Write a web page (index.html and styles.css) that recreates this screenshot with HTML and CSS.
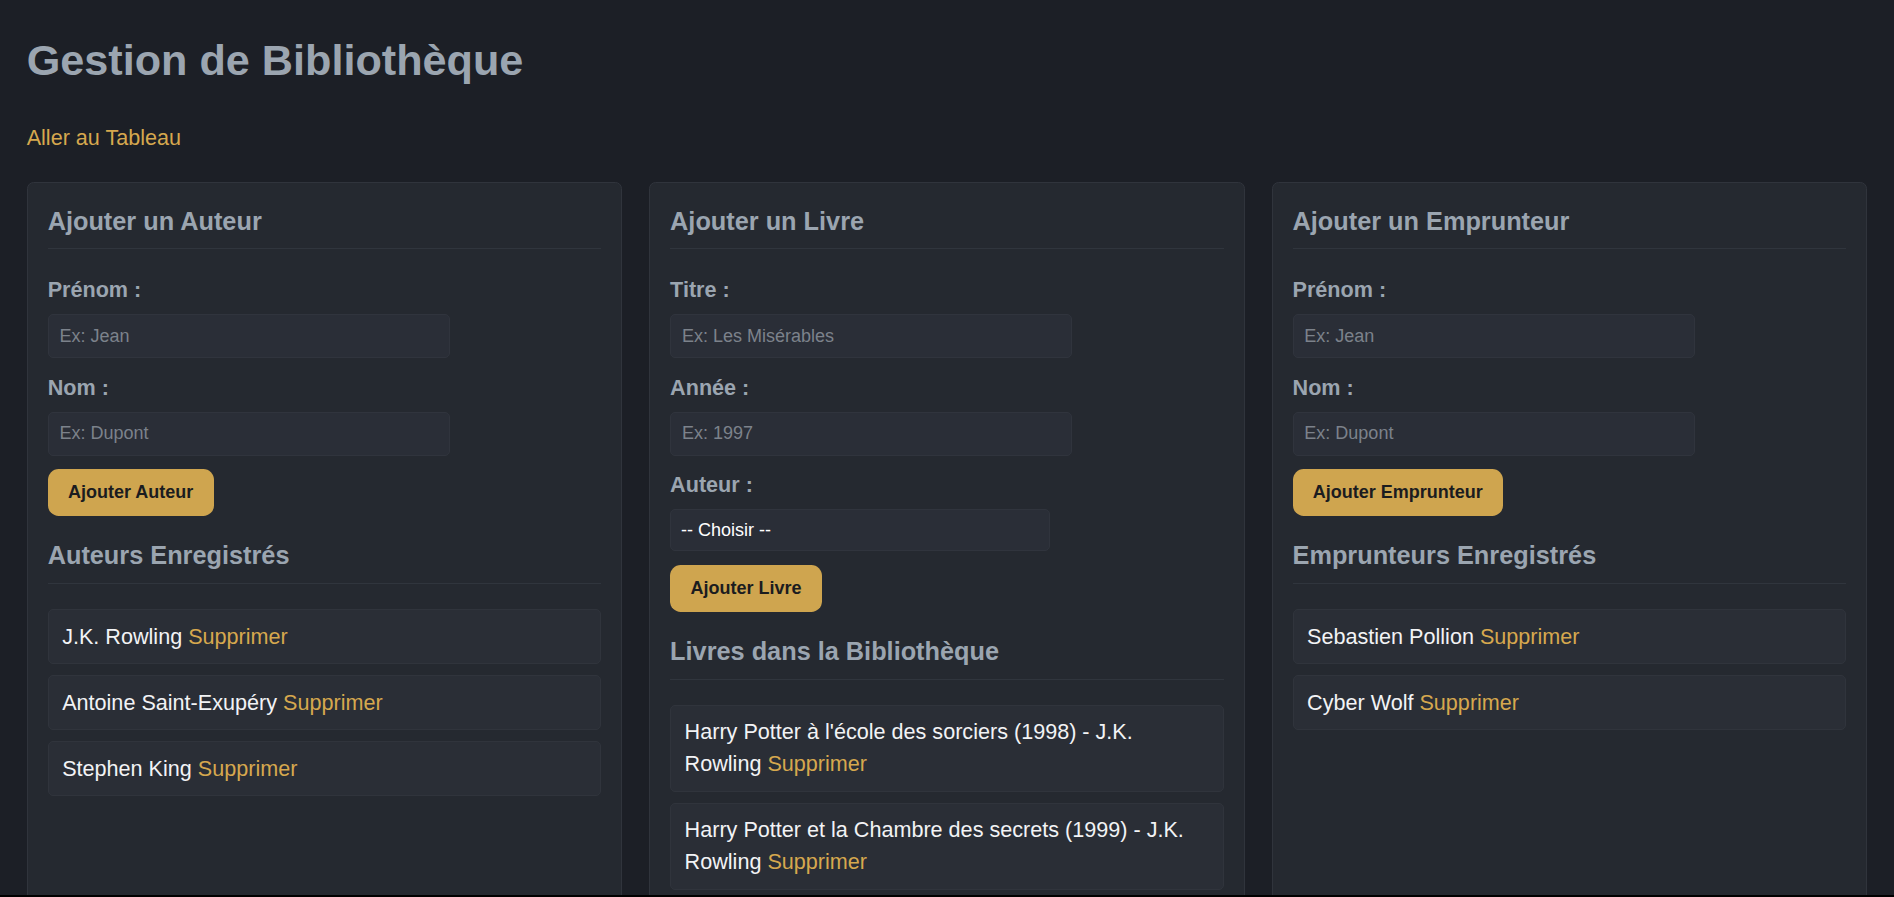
FILE: index.html
```html
<!DOCTYPE html>
<html lang="fr">
<head>
<meta charset="utf-8">
<title>Gestion de Bibliothèque</title>
<link rel="stylesheet" href="styles.css">
</head>
<body>
<div class="page">
  <h1 class="title">Gestion de Bibliothèque</h1>
  <nav class="nav"><a class="link" href="#">Aller au Tableau</a></nav>

  <div class="grid">
    <section class="card">
      <h3 class="card-title">Ajouter un Auteur</h3>
      <form class="form">
        <label class="label">Prénom :</label>
        <input class="input" type="text" placeholder="Ex: Jean">
        <label class="label">Nom :</label>
        <input class="input" type="text" placeholder="Ex: Dupont">
        <button class="btn" type="button">Ajouter Auteur</button>
      </form>
      <h3 class="card-title list-title">Auteurs Enregistrés</h3>
      <ul class="list">
        <li class="item">J.K. Rowling <a class="link" href="#">Supprimer</a></li>
        <li class="item">Antoine Saint-Exupéry <a class="link" href="#">Supprimer</a></li>
        <li class="item">Stephen King <a class="link" href="#">Supprimer</a></li>
      </ul>
    </section>

    <section class="card">
      <h3 class="card-title">Ajouter un Livre</h3>
      <form class="form">
        <label class="label">Titre :</label>
        <input class="input" type="text" placeholder="Ex: Les Misérables">
        <label class="label">Année :</label>
        <input class="input" type="text" placeholder="Ex: 1997">
        <label class="label">Auteur :</label>
        <select class="select">
          <option>-- Choisir --</option>
          <option>J.K. Rowling</option>
          <option>Antoine Saint-Exupéry</option>
          <option>Stephen King</option>
        </select>
        <button class="btn" type="button">Ajouter Livre</button>
      </form>
      <h3 class="card-title list-title">Livres dans la Bibliothèque</h3>
      <ul class="list">
        <li class="item">Harry Potter à l'école des sorciers (1998) - J.K. Rowling <a class="link" href="#">Supprimer</a></li>
        <li class="item">Harry Potter et la Chambre des secrets (1999) - J.K. Rowling <a class="link" href="#">Supprimer</a></li>
      </ul>
    </section>

    <section class="card">
      <h3 class="card-title">Ajouter un Emprunteur</h3>
      <form class="form">
        <label class="label">Prénom :</label>
        <input class="input" type="text" placeholder="Ex: Jean">
        <label class="label">Nom :</label>
        <input class="input" type="text" placeholder="Ex: Dupont">
        <button class="btn" type="button">Ajouter Emprunteur</button>
      </form>
      <h3 class="card-title list-title">Emprunteurs Enregistrés</h3>
      <ul class="list">
        <li class="item">Sebastien Pollion <a class="link" href="#">Supprimer</a></li>
        <li class="item">Cyber Wolf <a class="link" href="#">Supprimer</a></li>
      </ul>
    </section>
  </div>
</div>
<div class="screen-edge"></div>
</body>
</html>
```

FILE: styles.css
```css
html {
  overflow: hidden;
  scrollbar-width: none;
}

body {
  margin: 0;
  background: #1c1f26;
  font-family: "Liberation Sans", Arial, sans-serif;
  color: #e6e8eb;
}

.page {
  padding: 26.67px;
}

.title {
  margin: 8.3px 0 0;
  font-size: 43.2px;
  line-height: 51.2px;
  font-weight: 700;
  color: #9ba5b0;
}

.nav {
  margin-top: 36.2px;
  font-size: 21.6px;
  line-height: 32px;
}

.link {
  color: #d6a84e;
  text-decoration: none;
}

.grid {
  margin-top: 27.4px;
  display: grid;
  grid-template-columns: 1fr 1fr 1fr;
  gap: 26.67px;
  align-items: stretch;
}

.card {
  background: #252930;
  border: 1px solid #30343c;
  border-radius: 6.67px;
  padding: 20px;
  min-width: 0;
}

.card-title {
  margin: 0 0 25px;
  padding-bottom: 8px;
  border-bottom: 1px solid #30353d;
  font-size: 25.3px;
  line-height: 37.5px;
  font-weight: 700;
  color: #9ba5b0;
}

.list-title {
  margin-top: 21.33px;
}

.form {
  margin: 0;
}

.label {
  display: block;
  margin-bottom: 8px;
  font-size: 21.6px;
  line-height: 32px;
  font-weight: 700;
  color: #9ba5b0;
}

.input,
.select {
  display: block;
  box-sizing: border-box;
  height: 44px;
  margin: 0 0 13.33px;
  padding: 0 10.8px;
  background: #2a2e37;
  border: 1px solid #30343d;
  border-radius: 5px;
  font-family: "Liberation Sans", Arial, sans-serif;
  font-size: 18px;
  color: #e6e8eb;
  outline: none;
}

.input {
  width: 402px;
}

.input::placeholder {
  color: #7c828b;
}

.select {
  width: 380px;
  height: 42.4px;
  padding: 0 10px;
  -webkit-appearance: none;
  appearance: none;
  color: #ffffff;
}

.btn {
  display: block;
  padding: 13.33px 20.3px;
  background: #cfa54f;
  border: none;
  border-radius: 10.67px;
  font-family: "Liberation Sans", Arial, sans-serif;
  font-size: 18px;
  font-weight: 700;
  line-height: 20.6px;
  color: #1b1c1f;
  cursor: pointer;
}

.list {
  list-style: none;
  margin: 0;
  padding: 0;
}

.item {
  margin-bottom: 10.67px;
  padding: 10.67px 13.5px;
  background: #2a2e36;
  border: 1px solid #30343c;
  border-radius: 5px;
  font-size: 21.6px;
  line-height: 32px;
  color: #f2f3f5;
}

.screen-edge {
  position: fixed;
  left: 0;
  right: 0;
  bottom: 0;
  height: 2px;
  background: #000;
}
```
